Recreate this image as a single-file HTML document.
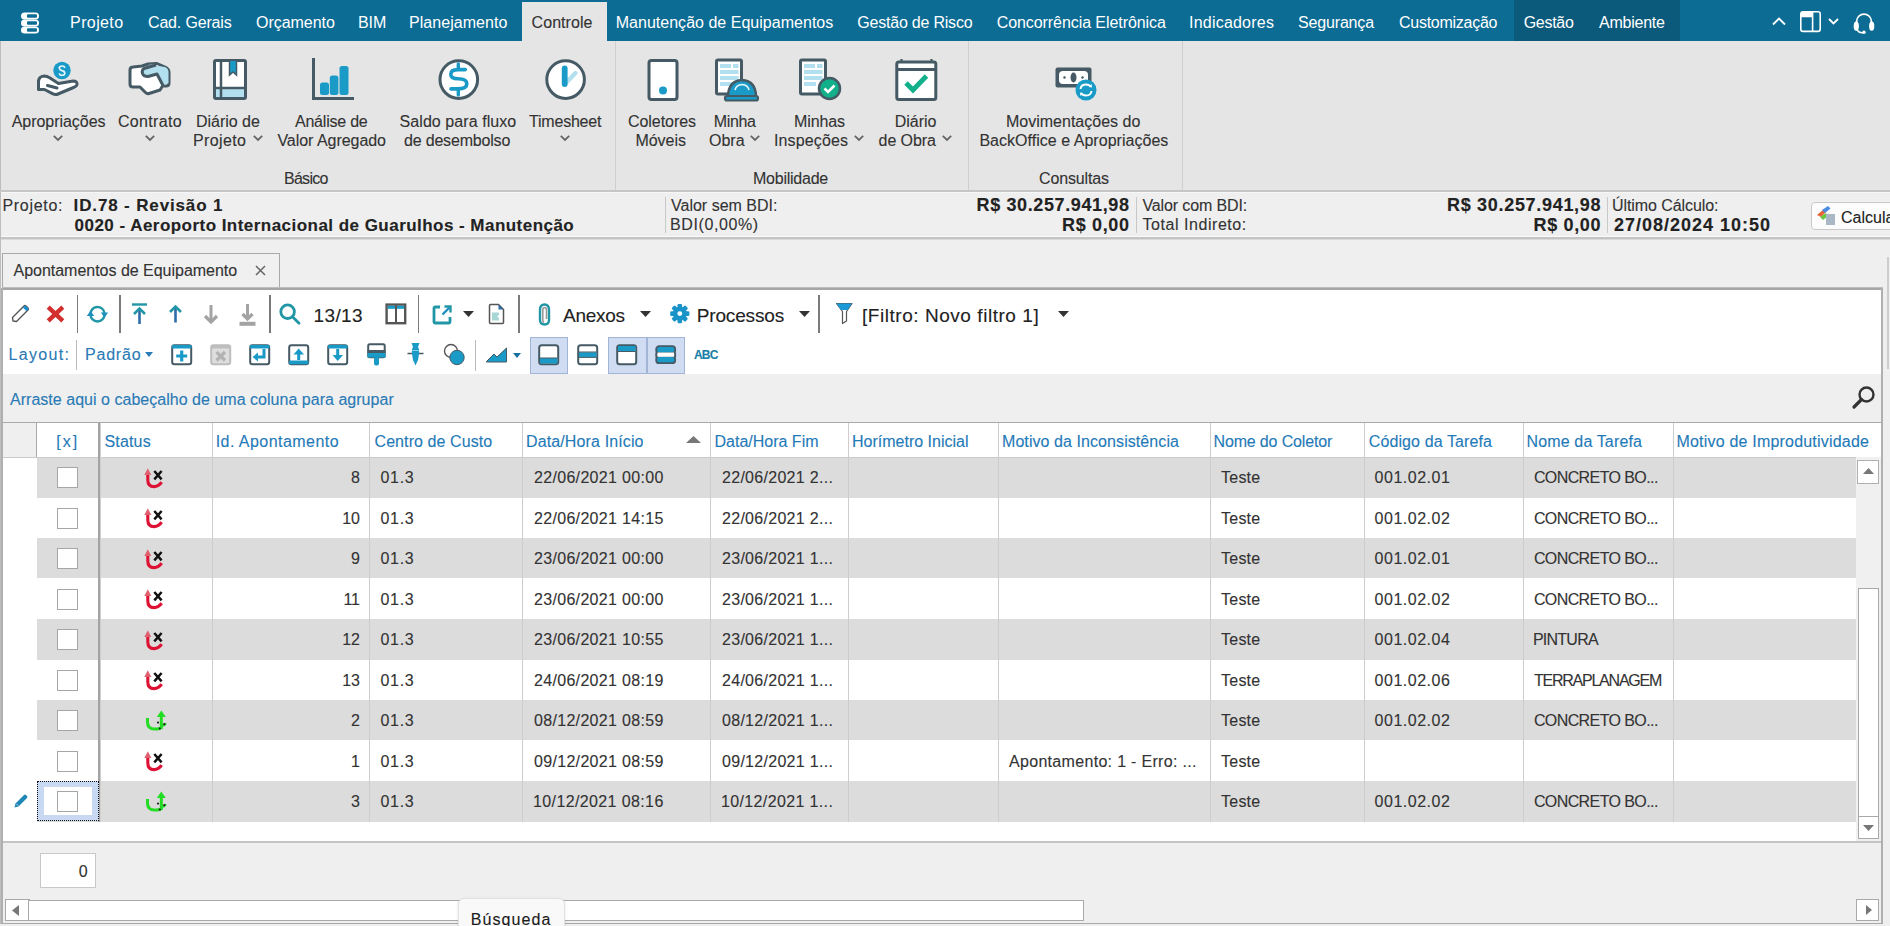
<!DOCTYPE html>
<html><head><meta charset="utf-8"><title>Apontamentos de Equipamento</title>
<style>
html,body{margin:0;padding:0}
body{width:1890px;height:926px;overflow:hidden;position:relative;background:#efefef;font-family:"Liberation Sans",sans-serif}
.a{position:absolute}
.t{position:absolute;white-space:nowrap;line-height:1;-webkit-text-stroke:0.12px currentColor}
svg{overflow:visible}
</style></head><body>

<div class="a" style="left:0px;top:0px;width:1890px;height:41px;background:#0d6c94;"></div>
<div class="a" style="left:1514px;top:0px;width:166px;height:41px;background:#0c5a7b;"></div>
<div class="a" style="left:522px;top:2px;width:85px;height:39px;background:#e5e5e5;"></div>
<svg class="a" style="left:21px;top:12px" width="19" height="22" viewBox="0 0 19 22">
<g fill="#fff"><rect x="0" y="0.5" width="18" height="7" rx="3.5"/><rect x="0" y="7.5" width="18" height="7" rx="3.5"/><rect x="0" y="14.5" width="18" height="7" rx="3.5"/></g>
<g fill="#0d6c94"><rect x="6" y="2.3" width="10" height="3.4" rx="1"/><rect x="6" y="9.3" width="10" height="3.4" rx="1"/><rect x="6" y="16.3" width="10" height="3.4" rx="1"/></g></svg>
<div class="t" style="left:70.10px;top:15px;font-size:16px;color:#fff;letter-spacing:0.384px;-webkit-text-stroke:0;">Projeto</div>
<div class="t" style="left:148.00px;top:15px;font-size:16px;color:#fff;letter-spacing:-0.167px;-webkit-text-stroke:0;">Cad. Gerais</div>
<div class="t" style="left:256.00px;top:15px;font-size:16px;color:#fff;letter-spacing:-0.030px;-webkit-text-stroke:0;">Orçamento</div>
<div class="t" style="left:358.00px;top:15px;font-size:16px;color:#fff;letter-spacing:-0.059px;-webkit-text-stroke:0;">BIM</div>
<div class="t" style="left:409.00px;top:15px;font-size:16px;color:#fff;letter-spacing:0.050px;-webkit-text-stroke:0;">Planejamento</div>
<div class="t" style="left:531.60px;top:15px;font-size:16px;color:#333;letter-spacing:0.046px;">Controle</div>
<div class="t" style="left:615.70px;top:15px;font-size:16px;color:#fff;letter-spacing:0.022px;-webkit-text-stroke:0;">Manutenção de Equipamentos</div>
<div class="t" style="left:857.30px;top:15px;font-size:16px;color:#fff;letter-spacing:-0.213px;-webkit-text-stroke:0;">Gestão de Risco</div>
<div class="t" style="left:996.70px;top:15px;font-size:16px;color:#fff;letter-spacing:-0.071px;-webkit-text-stroke:0;">Concorrência Eletrônica</div>
<div class="t" style="left:1189.00px;top:15px;font-size:16px;color:#fff;letter-spacing:0.218px;-webkit-text-stroke:0;">Indicadores</div>
<div class="t" style="left:1298.00px;top:15px;font-size:16px;color:#fff;letter-spacing:-0.162px;-webkit-text-stroke:0;">Segurança</div>
<div class="t" style="left:1399.00px;top:15px;font-size:16px;color:#fff;letter-spacing:-0.262px;-webkit-text-stroke:0;">Customização</div>
<div class="t" style="left:1523.70px;top:15px;font-size:16px;color:#fff;letter-spacing:-0.297px;-webkit-text-stroke:0;">Gestão</div>
<div class="t" style="left:1599.00px;top:15px;font-size:16px;color:#fff;letter-spacing:-0.242px;-webkit-text-stroke:0;">Ambiente</div>
<svg class="a" style="left:1772px;top:16px" width="14" height="10" viewBox="0 0 14 10"><path d="M1 8.5 L7 2.5 L13 8.5" fill="none" stroke="#fff" stroke-width="1.8"/></svg>
<svg class="a" style="left:1800px;top:11px" width="21" height="21" viewBox="0 0 21 21"><rect x="0.8" y="0.8" width="19.4" height="19.6" rx="2.2" fill="none" stroke="#fff" stroke-width="1.6"/><path d="M1 3 Q1 0.8 3 0.8 H12.6 V6.3 H1 Z" fill="#fff"/><path d="M12.6 1 V20.5" stroke="#fff" stroke-width="1.6"/></svg>
<svg class="a" style="left:1828px;top:18px" width="11" height="7" viewBox="0 0 11 7"><path d="M1 1 L5.5 5.5 L10 1" fill="none" stroke="#fff" stroke-width="1.8"/></svg>
<svg class="a" style="left:1853px;top:11px" width="22" height="22" viewBox="0 0 22 22"><path d="M3.6 14 V10.5 A7.4 7.4 0 0 1 18.4 10.5 V14" fill="none" stroke="#fff" stroke-width="1.7"/><ellipse cx="3.3" cy="15.2" rx="2.6" ry="4.6" fill="#fff"/><ellipse cx="18.7" cy="15.2" rx="2.6" ry="4.6" fill="#fff"/><path d="M4 19 Q6.5 22.5 10.5 21.5" fill="none" stroke="#fff" stroke-width="1.5"/><circle cx="11" cy="21.3" r="1.7" fill="#fff"/></svg>
<div class="a" style="left:1887px;top:13px;width:3px;height:18px;background:#0d6c94;"></div>
<div class="a" style="left:0px;top:41px;width:1890px;height:149px;background:#e5e5e5;"></div>
<div class="a" style="left:0px;top:41px;width:1px;height:149px;background:#bdbdbd;"></div>
<div class="a" style="left:0px;top:190px;width:1890px;height:2px;background:#c6c6c6;"></div>
<div class="a" style="left:615px;top:41px;width:1px;height:149px;background:#cfcfcf;"></div>
<div class="a" style="left:968px;top:41px;width:1px;height:149px;background:#cfcfcf;"></div>
<div class="a" style="left:1182px;top:41px;width:1px;height:149px;background:#cfcfcf;"></div>
<div class="t" style="left:11.70px;top:114px;font-size:16px;color:#333;letter-spacing:-0.043px;">Apropriações</div>
<svg class="a" style="left:53px;top:135px" width="10" height="6" viewBox="0 0 10 6"><path d="M0.8 0.8 L5 5 L9.2 0.8" fill="none" stroke="#666" stroke-width="1.8"/></svg>
<div class="t" style="left:118.00px;top:114px;font-size:16px;color:#333;letter-spacing:0.319px;">Contrato</div>
<svg class="a" style="left:145px;top:135px" width="10" height="6" viewBox="0 0 10 6"><path d="M0.8 0.8 L5 5 L9.2 0.8" fill="none" stroke="#666" stroke-width="1.8"/></svg>
<div class="t" style="left:196.00px;top:114px;font-size:16px;color:#333;letter-spacing:-0.017px;">Diário de</div>
<div class="t" style="left:193.00px;top:133px;font-size:16px;color:#333;letter-spacing:0.367px;">Projeto</div>
<svg class="a" style="left:253px;top:135px" width="10" height="6" viewBox="0 0 10 6"><path d="M0.8 0.8 L5 5 L9.2 0.8" fill="none" stroke="#666" stroke-width="1.8"/></svg>
<div class="t" style="left:295.00px;top:114px;font-size:16px;color:#333;letter-spacing:-0.224px;">Análise de</div>
<div class="t" style="left:277.40px;top:133px;font-size:16px;color:#333;letter-spacing:-0.039px;">Valor Agregado</div>
<div class="t" style="left:399.60px;top:114px;font-size:16px;color:#333;letter-spacing:0.064px;">Saldo para fluxo</div>
<div class="t" style="left:404.00px;top:133px;font-size:16px;color:#333;letter-spacing:-0.185px;">de desembolso</div>
<div class="t" style="left:529.00px;top:114px;font-size:16px;color:#333;letter-spacing:-0.207px;">Timesheet</div>
<svg class="a" style="left:560px;top:135px" width="10" height="6" viewBox="0 0 10 6"><path d="M0.8 0.8 L5 5 L9.2 0.8" fill="none" stroke="#666" stroke-width="1.8"/></svg>
<div class="t" style="left:283.90px;top:171px;font-size:16px;color:#333;letter-spacing:-0.685px;">Básico</div>
<div class="t" style="left:628.00px;top:114px;font-size:16px;color:#333;letter-spacing:-0.060px;">Coletores</div>
<div class="t" style="left:635.40px;top:133px;font-size:16px;color:#333;letter-spacing:-0.016px;">Móveis</div>
<div class="t" style="left:713.70px;top:114px;font-size:16px;color:#333;letter-spacing:-0.345px;">Minha</div>
<div class="t" style="left:709.00px;top:133px;font-size:16px;color:#333;letter-spacing:0.009px;">Obra</div>
<svg class="a" style="left:750px;top:135px" width="10" height="6" viewBox="0 0 10 6"><path d="M0.8 0.8 L5 5 L9.2 0.8" fill="none" stroke="#666" stroke-width="1.8"/></svg>
<div class="t" style="left:794.00px;top:114px;font-size:16px;color:#333;letter-spacing:-0.116px;">Minhas</div>
<div class="t" style="left:774.00px;top:133px;font-size:16px;color:#333;letter-spacing:0.133px;">Inspeções</div>
<svg class="a" style="left:854px;top:135px" width="10" height="6" viewBox="0 0 10 6"><path d="M0.8 0.8 L5 5 L9.2 0.8" fill="none" stroke="#666" stroke-width="1.8"/></svg>
<div class="t" style="left:894.80px;top:114px;font-size:16px;color:#333;letter-spacing:-0.038px;">Diário</div>
<div class="t" style="left:878.60px;top:133px;font-size:16px;color:#333;letter-spacing:-0.086px;">de Obra</div>
<svg class="a" style="left:942px;top:135px" width="10" height="6" viewBox="0 0 10 6"><path d="M0.8 0.8 L5 5 L9.2 0.8" fill="none" stroke="#666" stroke-width="1.8"/></svg>
<div class="t" style="left:753.00px;top:171px;font-size:16px;color:#333;letter-spacing:-0.243px;">Mobilidade</div>
<div class="t" style="left:1006.00px;top:114px;font-size:16px;color:#333;">Movimentações do</div>
<div class="t" style="left:979.40px;top:133px;font-size:16px;color:#333;letter-spacing:0.028px;">BackOffice e Apropriações</div>
<div class="t" style="left:1039.00px;top:171px;font-size:16px;color:#333;letter-spacing:-0.144px;">Consultas</div>
<svg class="a" style="left:36px;top:60px" width="44" height="38" viewBox="0 0 44 38"><circle cx="26" cy="10.5" r="8.7" fill="#1a9bc7"/>
<path d="M23 8.2 Q23.5 6 26 6 Q28.5 6 28.8 7.8 M23.3 8.3 Q23.8 10.3 26 10.6 Q28.6 11 28.8 13.3 Q28.5 15.2 26 15.2 Q23.6 15.2 23.2 13.3" fill="none" stroke="#e8f6fb" stroke-width="1.6"/>
<path d="M2.5 21 Q3 16.5 8 16 Q11 16 14 18 L22.5 23.5 L37 21 Q41.5 21 41 24.5 Q40.5 26.5 37.5 27.5 L22 34 Q19.5 35 16.5 33.6 L8.5 29.5 L2.5 29.5 Z" fill="#fff" stroke="#455a64" stroke-width="3" stroke-linejoin="round"/>
<path d="M11.5 25.5 L21 28" fill="none" stroke="#455a64" stroke-width="3" stroke-linecap="round"/></svg>
<svg class="a" style="left:128px;top:62px" width="44" height="34" viewBox="0 0 44 34"><path d="M2 8 Q2 5 5 5 L14 4 L20 2 L29 1.5 L37 5 Q41 7 41 10 V21 Q41 24 38 24 L34.5 24 L32 28 L21 31.5 Q19 32 17.5 30.5 L12 25 L5 25 Q2 25 2 22 Z" fill="#fff" stroke="#455a64" stroke-width="3" stroke-linejoin="round"/>
<path d="M20 2.5 L37 5 Q40.5 6.5 40.5 10 V21 L34 23.5 L29 12.5 Q24 13.5 20 14.5 Q14.5 15.5 14.5 10 Q14.5 6.5 20 5.5 L28 2.5" fill="#b3e0ee"/>
<path d="M28 3 L16 6.5 Q13.5 8 14.5 11.5 Q15.5 14.5 20 14.5 L29 12 L35 23.5" fill="none" stroke="#455a64" stroke-width="3" stroke-linejoin="round"/></svg>
<svg class="a" style="left:212px;top:58px" width="36" height="44" viewBox="0 0 36 44"><rect x="2.5" y="2.5" width="31" height="38" rx="1.5" fill="#fff" stroke="#455a64" stroke-width="3"/>
<rect x="4" y="31" width="28" height="8" fill="#b3e0ee"/><path d="M4 30 H32" stroke="#455a64" stroke-width="2.5"/>
<path d="M9 2.5 V39" stroke="#455a64" stroke-width="2.5"/>
<path d="M17.5 3 V17 L21 14 L24.5 17 V3" fill="#1a9bc7" stroke="#455a64" stroke-width="1.5"/></svg>
<svg class="a" style="left:311px;top:58px" width="44" height="44" viewBox="0 0 44 44"><path d="M2.5 0 V40.5 H43" fill="none" stroke="#455a64" stroke-width="3"/>
<rect x="9" y="24.5" width="9" height="12.5" rx="2.5" fill="#1a9bc7"/><rect x="18.8" y="17.5" width="8.6" height="19.5" rx="2.5" fill="#1a9bc7"/><rect x="28.5" y="8" width="9" height="29" rx="2.5" fill="#1a9bc7"/></svg>
<svg class="a" style="left:437px;top:58px" width="44" height="44" viewBox="0 0 44 44"><circle cx="21.8" cy="21.6" r="18.8" fill="#fff" stroke="#455a64" stroke-width="3"/>
<path d="M28.3 11.6 H21 Q13.8 11.6 13.8 16.2 Q13.8 20.7 21 20.7 Q29.8 20.7 29.8 25.8 Q29.8 30.9 21 30.9 H14" fill="none" stroke="#1a9bc7" stroke-width="3.6" stroke-linecap="round" stroke-linejoin="round"/><path d="M21.3 6 V11.4 M21.3 31 V37" stroke="#1a9bc7" stroke-width="3.4" stroke-linecap="round"/></svg>
<svg class="a" style="left:543px;top:58px" width="44" height="44" viewBox="0 0 44 44"><circle cx="22.6" cy="21.6" r="18.8" fill="#fff" stroke="#455a64" stroke-width="3"/>
<path d="M22.5 25.5 L32.5 15" stroke="#b3e0ee" stroke-width="4.2" stroke-linecap="round"/><path d="M21.7 10.5 V26" stroke="#1a9bc7" stroke-width="5.8" stroke-linecap="round"/></svg>
<svg class="a" style="left:646px;top:58px" width="34" height="44" viewBox="0 0 34 44"><rect x="3" y="2.5" width="28" height="39" rx="2.5" fill="#fff" stroke="#455a64" stroke-width="3"/><circle cx="17" cy="32.5" r="4" fill="#1a9bc7"/></svg>
<svg class="a" style="left:714px;top:58px" width="45" height="44" viewBox="0 0 45 44"><rect x="2.5" y="2" width="25" height="34" rx="1.5" fill="#fff" stroke="#455a64" stroke-width="3"/>
<rect x="6" y="6" width="11" height="4" fill="#b3e0ee"/><rect x="19" y="6" width="5.5" height="4" fill="#b3e0ee"/><rect x="6" y="12" width="18.5" height="4" fill="#b3e0ee"/><rect x="6" y="18" width="18.5" height="4" fill="#b3e0ee"/><rect x="6" y="24" width="12" height="4" fill="#b3e0ee"/>
<path d="M14 39 Q14 23 28 22 Q42 23 42 39 Z" fill="#1a9bc7" stroke="#455a64" stroke-width="2.5" stroke-linejoin="round"/><rect x="11" y="38" width="33" height="4.5" rx="2" fill="#1a9bc7" stroke="#455a64" stroke-width="2.2"/>
<path d="M21 32 Q22 27 28 26.5 Q34 27 35 32" fill="none" stroke="#e6f5fa" stroke-width="1.6"/></svg>
<svg class="a" style="left:798px;top:58px" width="45" height="44" viewBox="0 0 45 44"><rect x="2.5" y="2" width="25" height="34" rx="1.5" fill="#fff" stroke="#455a64" stroke-width="3"/>
<rect x="6" y="6" width="11" height="4" fill="#b3e0ee"/><rect x="19" y="6" width="5.5" height="4" fill="#b3e0ee"/><rect x="6" y="12" width="18.5" height="4" fill="#b3e0ee"/><rect x="6" y="18" width="18.5" height="4" fill="#b3e0ee"/><rect x="6" y="24" width="12" height="4" fill="#b3e0ee"/>
<circle cx="31.5" cy="30.5" r="10.5" fill="#12b08a" stroke="#455a64" stroke-width="2.5"/><path d="M26.5 30.5 L30 34 L36.5 27.5" fill="none" stroke="#fff" stroke-width="2.6"/></svg>
<svg class="a" style="left:894px;top:57px" width="46" height="46" viewBox="0 0 46 46"><rect x="2.8" y="5" width="39" height="37.5" rx="2" fill="#fff" stroke="#455a64" stroke-width="3"/><path d="M3 12.5 H42" stroke="#455a64" stroke-width="3"/>
<path d="M7.5 2 V6 M37.5 2 V6" stroke="#455a64" stroke-width="2.2"/>
<path d="M12 26 L19 33 L32.5 19" fill="none" stroke="#12b08a" stroke-width="4.8"/></svg>
<svg class="a" style="left:1054px;top:66px" width="40" height="36" viewBox="0 0 40 36"><rect x="1.5" y="1.5" width="36" height="20" rx="2" fill="#455a64"/><rect x="5" y="5" width="29" height="13" rx="4" fill="#fff"/>
<ellipse cx="19.5" cy="11.5" rx="3" ry="5" fill="#455a64"/><circle cx="10.5" cy="11.5" r="1.2" fill="#455a64"/><circle cx="28.5" cy="11.5" r="1.2" fill="#455a64"/>
<circle cx="32" cy="24" r="10.5" fill="#1a9bc7"/><path d="M26.5 23 Q27 18.5 32 18.5 Q35.5 18.5 37 21 M37.5 25 Q37 29.5 32 29.5 Q28.5 29.5 27 27" fill="none" stroke="#fff" stroke-width="2"/>
<path d="M35 20.5 L38 21.5 L37.5 18" fill="#fff"/><path d="M29 27.5 L26 26.5 L26.5 30" fill="#fff"/></svg>
<div class="a" style="left:0px;top:192px;width:1890px;height:46px;background:#efefef;"></div>
<div class="a" style="left:0px;top:192px;width:1890px;height:1px;background:#f7f7f7;"></div>
<div class="a" style="left:0px;top:236px;width:1890px;height:1px;background:#fafafa;"></div>
<div class="a" style="left:0px;top:237px;width:1890px;height:2px;background:#c4c4c4;"></div>
<div class="a" style="left:0px;top:239px;width:1890px;height:1px;background:#dadada;"></div>
<div class="a" style="left:0px;top:192px;width:1px;height:47px;background:#bdbdbd;"></div>
<div class="t" style="left:2.50px;top:198px;font-size:16px;color:#333;letter-spacing:0.686px;">Projeto:</div>
<div class="t" style="left:73.60px;top:197px;font-size:17px;color:#222;font-weight:700;letter-spacing:0.858px;">ID.78 - Revisão 1</div>
<div class="t" style="left:74.60px;top:217px;font-size:17px;color:#222;font-weight:700;letter-spacing:0.465px;">0020 - Aeroporto Internacional de Guarulhos - Manutenção</div>
<div class="a" style="left:665px;top:197px;width:1px;height:36px;background:#c8c8c8;"></div>
<div class="t" style="left:671.00px;top:198px;font-size:16px;color:#333;letter-spacing:0.004px;">Valor sem BDI:</div>
<div class="t" style="left:670.00px;top:217px;font-size:16px;color:#333;letter-spacing:0.604px;">BDI(0,00%)</div>
<div class="t" style="left:976.50px;top:196px;font-size:18px;color:#222;font-weight:700;letter-spacing:0.626px;">R$ 30.257.941,98</div>
<div class="t" style="left:1062.00px;top:216px;font-size:18px;color:#222;font-weight:700;letter-spacing:0.661px;">R$ 0,00</div>
<div class="a" style="left:1136px;top:197px;width:1px;height:36px;background:#c8c8c8;"></div>
<div class="t" style="left:1142.50px;top:198px;font-size:16px;color:#333;letter-spacing:-0.135px;">Valor com BDI:</div>
<div class="t" style="left:1142.50px;top:217px;font-size:16px;color:#333;letter-spacing:0.549px;">Total Indireto:</div>
<div class="t" style="left:1447.00px;top:196px;font-size:18px;color:#222;font-weight:700;letter-spacing:0.693px;">R$ 30.257.941,98</div>
<div class="t" style="left:1533.50px;top:216px;font-size:18px;color:#222;font-weight:700;letter-spacing:0.661px;">R$ 0,00</div>
<div class="a" style="left:1607px;top:197px;width:1px;height:36px;background:#c8c8c8;"></div>
<div class="t" style="left:1612.00px;top:198px;font-size:16px;color:#333;letter-spacing:-0.081px;">Último Cálculo:</div>
<div class="t" style="left:1614.00px;top:216px;font-size:18px;color:#222;font-weight:700;letter-spacing:0.992px;">27/08/2024 10:50</div>
<div class="a" style="left:1811px;top:202px;width:100px;height:28px;background:#fcfcfc;border:1px solid #c9c9c9;border-radius:4px;box-sizing:border-box"></div>
<svg class="a" style="left:1815px;top:205px" width="22" height="22" viewBox="0 0 22 22"><path d="M2 10 L9 4 L11 7 L6 12 Z" fill="#e8643c"/><path d="M7 5 L13 1 L15.5 3.5 L10 8 Z" fill="#4a8de0"/><path d="M5 12 L11 8 L13 11 L8 15 Z" fill="#6cc644"/><rect x="11" y="9" width="9" height="11" fill="#a9b7c6"/></svg>
<div class="t" style="left:1841.00px;top:210px;font-size:16px;color:#222;">Calcula</div>
<div class="a" style="left:0px;top:240px;width:1890px;height:48px;background:#efefef;"></div>
<div class="a" style="left:0px;top:239px;width:1px;height:687px;background:#bdbdbd;"></div>
<div class="a" style="left:2px;top:253px;width:278px;height:36px;background:#f0f0f0;border:1px solid #a9a9a9;border-bottom:none;box-sizing:border-box"></div>
<div class="t" style="left:13.50px;top:263px;font-size:16px;color:#333;letter-spacing:-0.018px;">Apontamentos de Equipamento</div>
<svg class="a" style="left:255px;top:265px" width="11" height="11" viewBox="0 0 11 11"><path d="M1 1 L10 10 M10 1 L1 10" stroke="#666" stroke-width="1.5"/></svg>
<div class="a" style="left:1887px;top:257px;width:2px;height:112px;background:#cdcdcd;"></div>
<div class="a" style="left:2px;top:287px;width:1881px;height:1px;background:#bdbdbd;"></div>
<div class="a" style="left:2px;top:288px;width:1881px;height:2px;background:#a6a6a6;"></div>
<div class="a" style="left:1px;top:288px;width:2px;height:638px;background:#b0b0b0;"></div>
<div class="a" style="left:1881px;top:288px;width:2px;height:636px;background:#b0b0b0;"></div>
<div class="a" style="left:3px;top:290px;width:1878px;height:84px;background:#fff;"></div>
<div class="a" style="left:3px;top:374px;width:1878px;height:48px;background:#efefef;"></div>
<svg class="a" style="left:11px;top:304px" width="19" height="19" viewBox="0 0 19 19"><path d="M2 17 L1.5 13.5 L13 2 Q14 1 15 2 L17 4 Q18 5 17 6 L5.5 17.5 Z" fill="#fff" stroke="#555" stroke-width="1.4" stroke-linejoin="round"/><path d="M13.2 2.2 Q14 1.2 15 2 L17 4 Q17.8 5 17 5.8 L15.6 7.2 L11.8 3.5 Z" fill="#1a8fd0"/></svg>
<svg class="a" style="left:46px;top:305px" width="19" height="18" viewBox="0 0 19 18"><path d="M2.2 2.2 L16.8 15.8 M16.8 2.2 L2.2 15.8" stroke="#d32f2f" stroke-width="4.4"/></svg>
<div class="a" style="left:76.5px;top:295px;width:1.5px;height:38px;background:#7a7a7a;"></div>
<svg class="a" style="left:86px;top:304px" width="23" height="20" viewBox="0 0 23 20"><path d="M4.5 10.5 A7 7 0 0 1 18.5 9.5" fill="none" stroke="#2196a6" stroke-width="2.4"/><path d="M18.5 10.5 A7 7 0 0 1 4.5 10.5" fill="none" stroke="#2196a6" stroke-width="2.4"/><path d="M0.8 12 L4.5 6.8 L8.2 12 Z" fill="#1f8fc0"/><path d="M14.8 8.5 L18.5 13.5 L22.2 8.5 Z" fill="#1f8fc0"/></svg>
<div class="a" style="left:119px;top:295px;width:1.5px;height:38px;background:#7a7a7a;"></div>
<svg class="a" style="left:131px;top:303px" width="17" height="22" viewBox="0 0 17 22"><path d="M1 1.5 H16" stroke="#2196a6" stroke-width="2.4"/><path d="M8.5 7 V21" stroke="#2d6ca8" stroke-width="2.6"/><path d="M3 11 L8.5 5.5 L14 11" fill="none" stroke="#2196a6" stroke-width="2.6"/></svg>
<svg class="a" style="left:168px;top:304px" width="15" height="20" viewBox="0 0 15 20"><path d="M7.5 3 V18.5" stroke="#2d6ca8" stroke-width="2.6"/><path d="M2 8 L7.5 2.5 L13 8" fill="none" stroke="#2196a6" stroke-width="2.6"/></svg>
<svg class="a" style="left:203px;top:304px" width="16" height="20" viewBox="0 0 16 20"><path d="M8 1 V16" stroke="#a3a3a3" stroke-width="3"/><path d="M2 12 L8 18 L14 12" fill="none" stroke="#a3a3a3" stroke-width="3.2"/></svg>
<svg class="a" style="left:238px;top:303px" width="19" height="24" viewBox="0 0 19 24"><path d="M9.5 1 V14" stroke="#a3a3a3" stroke-width="3"/><path d="M4.5 11 L9.5 16 L14.5 11" fill="none" stroke="#a3a3a3" stroke-width="3.2"/><path d="M1.5 20.8 H17.5" stroke="#a3a3a3" stroke-width="4"/></svg>
<div class="a" style="left:269px;top:295px;width:1.5px;height:38px;background:#7a7a7a;"></div>
<svg class="a" style="left:278px;top:303px" width="23" height="22" viewBox="0 0 23 22"><circle cx="9.6" cy="8.7" r="6.8" fill="none" stroke="#2196a6" stroke-width="2.8"/><path d="M14.5 13.8 L21 20.3" stroke="#2196a6" stroke-width="2.8" stroke-linecap="round"/></svg>
<div class="t" style="left:313.60px;top:306px;font-size:19px;color:#222;letter-spacing:0.355px;">13/13</div>
<svg class="a" style="left:385px;top:303px" width="22" height="22" viewBox="0 0 22 22"><rect x="1.6" y="1.6" width="18.6" height="18.6" fill="#fff" stroke="#555" stroke-width="2.4"/><rect x="2.8" y="2.8" width="7.3" height="3" fill="#1a9bc7"/><rect x="11.9" y="2.8" width="7.3" height="3" fill="#1a9bc7"/><path d="M11 2 V20" stroke="#555" stroke-width="2"/></svg>
<div class="a" style="left:417.5px;top:295px;width:1.5px;height:38px;background:#7a7a7a;"></div>
<svg class="a" style="left:432px;top:305px" width="21" height="20" viewBox="0 0 21 20"><path d="M8 2 H3.5 Q2 2 2 3.5 V16.5 Q2 18 3.5 18 H16.5 Q18 18 18 16.5 V12" fill="none" stroke="#2196a6" stroke-width="2.8"/><path d="M10.5 9.5 L18 2" stroke="#1f8fc0" stroke-width="2.4"/><path d="M12.5 1.5 H18.5 V7.5" fill="none" stroke="#2196a6" stroke-width="2.4"/></svg>
<svg class="a" style="left:463px;top:311px" width="11" height="6" viewBox="0 0 11 6"><path d="M0 0 H11 L5.5 6 Z" fill="#333"/></svg>
<svg class="a" style="left:488px;top:303px" width="17" height="22" viewBox="0 0 17 22"><path d="M2 1.5 H10.5 L15.5 6.5 V19.5 Q15.5 20.5 14.5 20.5 H2.5 Q1.5 20.5 1.5 19.5 V2.5 Q1.5 1.5 2.5 1.5" fill="#fff" stroke="#555" stroke-width="1.5"/><path d="M10.5 1.5 L15.5 6.5 H10.5 Z" fill="#2d6ca8"/><path d="M4 9.5 H11 V12 L9 13.5 L11 15 V17.5 H4 Z" fill="#a6d6d6"/></svg>
<div class="a" style="left:518px;top:295px;width:1.5px;height:38px;background:#7a7a7a;"></div>
<svg class="a" style="left:537px;top:303px" width="15" height="23" viewBox="0 0 15 23"><path d="M3 17 V6.5 Q3 1.5 7.5 1.5 Q12 1.5 12 6.5 V17 Q12 21.5 7.5 21.5 Q3 21.5 3 17" fill="none" stroke="#2196a6" stroke-width="2.4"/><path d="M9.5 16 V7 Q9.5 4.5 7.5 4.5 Q5.8 4.5 5.8 7 V17.5 Q5.8 19 7 19.5" fill="none" stroke="#999" stroke-width="1.6"/></svg>
<div class="t" style="left:563.00px;top:306px;font-size:19px;color:#222;letter-spacing:-0.295px;">Anexos</div>
<svg class="a" style="left:640px;top:311px" width="11" height="6" viewBox="0 0 11 6"><path d="M0 0 H11 L5.5 6 Z" fill="#333"/></svg>
<svg class="a" style="left:670px;top:304px" width="20" height="20" viewBox="0 0 20 20"><g transform="translate(9.8,9.6)"><g fill="#1a93c9"><rect x="-2.3" y="-9.6" width="4.6" height="5" rx="1.2" transform="rotate(0)"/><rect x="-2.3" y="-9.6" width="4.6" height="5" rx="1.2" transform="rotate(45)"/><rect x="-2.3" y="-9.6" width="4.6" height="5" rx="1.2" transform="rotate(90)"/><rect x="-2.3" y="-9.6" width="4.6" height="5" rx="1.2" transform="rotate(135)"/><rect x="-2.3" y="-9.6" width="4.6" height="5" rx="1.2" transform="rotate(180)"/><rect x="-2.3" y="-9.6" width="4.6" height="5" rx="1.2" transform="rotate(225)"/><rect x="-2.3" y="-9.6" width="4.6" height="5" rx="1.2" transform="rotate(270)"/><rect x="-2.3" y="-9.6" width="4.6" height="5" rx="1.2" transform="rotate(315)"/></g><circle r="6.9" fill="#1a93c9"/><circle r="2.4" fill="#fff"/></g></svg>
<div class="t" style="left:696.80px;top:306px;font-size:19px;color:#222;letter-spacing:-0.163px;">Processos</div>
<svg class="a" style="left:799px;top:311px" width="11" height="6" viewBox="0 0 11 6"><path d="M0 0 H11 L5.5 6 Z" fill="#333"/></svg>
<div class="a" style="left:818px;top:295px;width:1.5px;height:38px;background:#7a7a7a;"></div>
<svg class="a" style="left:836px;top:303px" width="17" height="21" viewBox="0 0 17 21"><path d="M0.5 0.5 H16 L10.5 8.5 V18 L6.5 20.5 V8.5 Z" fill="#fff" stroke="#555" stroke-width="1.2" stroke-linejoin="round"/><path d="M0.5 0.5 H16 L11.5 7 H5 Z" fill="#1a9bd7"/></svg>
<div class="t" style="left:862.00px;top:306px;font-size:19px;color:#222;letter-spacing:0.544px;">[Filtro: Novo filtro 1]</div>
<svg class="a" style="left:1058px;top:311px" width="11" height="6" viewBox="0 0 11 6"><path d="M0 0 H11 L5.5 6 Z" fill="#333"/></svg>
<div class="t" style="left:8.60px;top:347px;font-size:16px;color:#2a7ab5;letter-spacing:1.293px;">Layout:</div>
<div class="a" style="left:75.5px;top:340px;width:1.2px;height:30px;background:#bdbdbd;"></div>
<div class="t" style="left:85.00px;top:347px;font-size:16px;color:#2a7ab5;letter-spacing:0.801px;">Padrão</div>
<svg class="a" style="left:145px;top:352px" width="8" height="5" viewBox="0 0 8 5"><path d="M0 0 H8 L4 5 Z" fill="#2a7ab5"/></svg>
<svg class="a" style="left:171px;top:344px" width="22" height="22" viewBox="0 0 22 22"><rect x="1.2" y="1.2" width="19" height="19" rx="2.2" fill="#fff" stroke="#455a64" stroke-width="2"/><rect x="1" y="1" width="19.5" height="3.5" rx="1" fill="#1a9bc7"/><path d="M10.7 6.5 V17.5 M5.2 12 H16.2" stroke="#1a9bc7" stroke-width="3.2"/></svg>
<svg class="a" style="left:210px;top:344px" width="22" height="22" viewBox="0 0 22 22"><rect x="1.2" y="1.2" width="19" height="19" rx="2.2" fill="#dedede" stroke="#bdbdbd" stroke-width="2"/><rect x="1" y="1" width="19.5" height="3.5" rx="1" fill="#bdbdbd"/><path d="M6.5 8 L15 16.5 M15 8 L6.5 16.5" stroke="#b3b3b3" stroke-width="3.2"/></svg>
<svg class="a" style="left:249px;top:344px" width="22" height="22" viewBox="0 0 22 22"><rect x="1.2" y="1.2" width="19" height="19" rx="2.2" fill="#fff" stroke="#455a64" stroke-width="2"/><rect x="1" y="1" width="19.5" height="3.5" rx="1" fill="#1a9bc7"/><path d="M15 5 V13 H8" fill="none" stroke="#1a9bc7" stroke-width="3"/><path d="M3.5 13 L9 8.5 V17.5 Z" fill="#1a9bc7"/></svg>
<svg class="a" style="left:288px;top:344px" width="22" height="22" viewBox="0 0 22 22"><rect x="1.2" y="1.2" width="19" height="19" rx="2.2" fill="#fff" stroke="#455a64" stroke-width="2"/><rect x="1" y="16.5" width="19.5" height="3.8" rx="1" fill="#1a9bc7"/><path d="M10.7 16 V8" stroke="#1a9bc7" stroke-width="3"/><path d="M5.5 10.5 L10.7 4.5 L16 10.5 Z" fill="#1a9bc7"/></svg>
<svg class="a" style="left:327px;top:344px" width="22" height="22" viewBox="0 0 22 22"><rect x="1.2" y="1.2" width="19" height="19" rx="2.2" fill="#fff" stroke="#455a64" stroke-width="2"/><rect x="1" y="1" width="19.5" height="3.5" rx="1" fill="#1a9bc7"/><path d="M10.7 5 V13" stroke="#1a9bc7" stroke-width="3"/><path d="M5.5 11 L10.7 17 L16 11 Z" fill="#1a9bc7"/></svg>
<svg class="a" style="left:367px;top:343px" width="19" height="23" viewBox="0 0 19 23"><rect x="1.2" y="1.2" width="16.5" height="13" rx="1.5" fill="#fff" stroke="#455a64" stroke-width="2"/><rect x="0.5" y="7" width="18" height="3" fill="#455a64"/><rect x="0.5" y="10" width="18" height="4.5" fill="#1a9bc7"/><rect x="7" y="14" width="5" height="8.5" rx="2" fill="#1a9bc7"/></svg>
<svg class="a" style="left:407px;top:342px" width="17" height="24" viewBox="0 0 17 24"><path d="M4.5 1 H12.5 L11 5 L12.5 8.5 H4.5 L6 5 Z" fill="#1a9bc7"/><path d="M0.5 11.5 H16.5" stroke="#455a64" stroke-width="1.5"/><path d="M5 9 H12 V12 L11 18 L8.5 23.5 L6 18 L5 12 Z" fill="#1a9bc7"/></svg>
<svg class="a" style="left:443px;top:343px" width="23" height="23" viewBox="0 0 23 23"><circle cx="8" cy="8" r="6.5" fill="none" stroke="#555" stroke-width="1.4"/><circle cx="14" cy="14.5" r="7.2" fill="#1a9bc7" stroke="#455a64" stroke-width="1"/></svg>
<div class="a" style="left:474.5px;top:340px;width:1.2px;height:31px;background:#bdbdbd;"></div>
<svg class="a" style="left:486px;top:347px" width="22" height="16" viewBox="0 0 22 16"><path d="M0.5 14.5 L8 7 L11 10 L20.5 1 V15 H0.5 Z" fill="#1a9bc7" stroke="#455a64" stroke-width="1"/></svg>
<svg class="a" style="left:513px;top:353px" width="8" height="5" viewBox="0 0 8 5"><path d="M0 0 H8 L4 5 Z" fill="#1a6fa0"/></svg>
<div class="a" style="left:530px;top:337px;width:38px;height:37px;background:#cfdcf2;border:1.3px solid #a2b5d6;box-sizing:border-box"></div>
<div class="a" style="left:608px;top:337px;width:77px;height:37px;background:#cfdcf2;border:1.3px solid #a2b5d6;box-sizing:border-box"></div>
<div class="a" style="left:646px;top:337px;width:1.5px;height:37px;background:#a2b5d6;"></div>
<svg class="a" style="left:538px;top:344px" width="22" height="22" viewBox="0 0 22 22"><rect x="1.2" y="1.2" width="19" height="19" rx="2.5" fill="#fff" stroke="#455a64" stroke-width="2"/><rect x="2" y="14" width="17.5" height="5.5" fill="#1a9bc7"/><path d="M2 14 H19.5" stroke="#455a64" stroke-width="1"/></svg>
<svg class="a" style="left:577px;top:344px" width="22" height="22" viewBox="0 0 22 22"><rect x="1.2" y="1.2" width="19" height="19" rx="2.5" fill="#fff" stroke="#455a64" stroke-width="2"/><rect x="2" y="8.2" width="17.5" height="5" fill="#1a9bc7"/><path d="M2 8 H19.5 M2 13.4 H19.5" stroke="#455a64" stroke-width="1"/></svg>
<svg class="a" style="left:616px;top:344px" width="22" height="22" viewBox="0 0 22 22"><rect x="1.2" y="1.2" width="19" height="19" rx="2.5" fill="#fff" stroke="#455a64" stroke-width="2"/><rect x="2" y="2" width="17.5" height="5.5" fill="#1a9bc7"/><path d="M2 7.5 H19.5" stroke="#455a64" stroke-width="1"/></svg>
<svg class="a" style="left:655px;top:344px" width="22" height="22" viewBox="0 0 22 22"><rect x="1.2" y="2.2" width="19" height="7" rx="3" fill="#1a9bc7" stroke="#455a64" stroke-width="1.8"/><rect x="1.2" y="12.2" width="19" height="7" rx="3" fill="#1a9bc7" stroke="#455a64" stroke-width="1.8"/><rect x="2.5" y="8.5" width="16.5" height="4.3" fill="#fff"/><path d="M1.2 8.5 V13 M20.2 8.5 V13" stroke="#455a64" stroke-width="1.8"/></svg>
<div class="t" style="left:694.00px;top:349px;font-size:12px;color:#1a7fa8;font-weight:700;letter-spacing:-0.800px;font-family:"Liberation Sans";transform:scaleY(0.85);transform-origin:0 100%;">ABC</div>
<div class="t" style="left:10.00px;top:392px;font-size:16px;color:#2a7ab5;letter-spacing:0.025px;">Arraste aqui o cabeçalho de uma coluna para agrupar</div>
<svg class="a" style="left:1851px;top:385px" width="26" height="25" viewBox="0 0 26 25"><circle cx="15.5" cy="9.5" r="7" fill="none" stroke="#333" stroke-width="2.4"/><path d="M10.5 14.5 L3 22" stroke="#333" stroke-width="3.2" stroke-linecap="round"/></svg>
<div class="a" style="left:3px;top:422px;width:1878px;height:1.3px;background:#a9a9a9;"></div>
<div class="a" style="left:3px;top:423px;width:1878px;height:34px;background:#fff;"></div>
<div class="a" style="left:3px;top:423px;width:34px;height:34px;background:#efefef;"></div>
<div class="t" style="left:56.30px;top:434px;font-size:16px;color:#1f7ab8;letter-spacing:1.977px;">[x]</div>
<div class="t" style="left:104.40px;top:434px;font-size:16px;color:#1f7ab8;letter-spacing:0.188px;">Status</div>
<div class="t" style="left:215.70px;top:434px;font-size:16px;color:#1f7ab8;letter-spacing:0.456px;">Id. Apontamento</div>
<div class="t" style="left:374.50px;top:434px;font-size:16px;color:#1f7ab8;letter-spacing:0.085px;">Centro de Custo</div>
<div class="t" style="left:526.00px;top:434px;font-size:16px;color:#1f7ab8;letter-spacing:0.126px;">Data/Hora Início</div>
<div class="t" style="left:714.50px;top:434px;font-size:16px;color:#1f7ab8;">Data/Hora Fim</div>
<div class="t" style="left:852.00px;top:434px;font-size:16px;color:#1f7ab8;letter-spacing:0.005px;">Horímetro Inicial</div>
<div class="t" style="left:1002.00px;top:434px;font-size:16px;color:#1f7ab8;letter-spacing:0.074px;">Motivo da Inconsistência</div>
<div class="t" style="left:1213.50px;top:434px;font-size:16px;color:#1f7ab8;letter-spacing:-0.151px;">Nome do Coletor</div>
<div class="t" style="left:1368.80px;top:434px;font-size:16px;color:#1f7ab8;letter-spacing:0.103px;">Código da Tarefa</div>
<div class="t" style="left:1526.50px;top:434px;font-size:16px;color:#1f7ab8;letter-spacing:0.143px;">Nome da Tarefa</div>
<div class="t" style="left:1676.50px;top:434px;font-size:16px;color:#1f7ab8;letter-spacing:0.198px;">Motivo de Improdutividade</div>
<svg class="a" style="left:686px;top:436px" width="15" height="7" viewBox="0 0 15 7"><path d="M0 7 L7.5 0 L15 7 Z" fill="#777"/></svg>
<div class="a" style="left:3px;top:457px;width:34px;height:385px;background:#fff;"></div>
<div class="a" style="left:37px;top:457px;width:1819px;height:385px;background:#fff;"></div>
<div class="a" style="left:37px;top:457px;width:1819px;height:41px;background:#dcdcdc;"></div>
<div class="a" style="left:57px;top:467.0px;width:21px;height:21px;background:#fff;border:1.5px solid #a6a6a6;box-sizing:border-box"></div>
<svg class="a" style="left:143px;top:466px" width="21" height="22" viewBox="0 0 21 22"><path d="M4.8 7 V14 Q4.8 20.6 11 20.6 Q15.8 20.6 18.6 16.2" fill="none" stroke="#dd1133" stroke-width="3.1"/><path d="M1.3 9 L4.8 2.3 L8.3 9 Z" fill="#e06070"/><path d="M11.3 5 L18.6 13.3 M18.6 5 L11.3 13.3" stroke="#111" stroke-width="2.5"/></svg>
<div class="t" style="left:351.10px;top:470px;font-size:16px;color:#333;">8</div>
<div class="t" style="left:380.60px;top:470px;font-size:16px;color:#333;letter-spacing:0.619px;">01.3</div>
<div class="t" style="left:534.00px;top:470px;font-size:16px;color:#333;letter-spacing:0.316px;">22/06/2021 00:00</div>
<div class="t" style="left:722.00px;top:470px;font-size:16px;color:#333;letter-spacing:0.292px;">22/06/2021 2...</div>
<div class="t" style="left:1221.00px;top:470px;font-size:16px;color:#333;letter-spacing:0.239px;">Teste</div>
<div class="t" style="left:1374.60px;top:470px;font-size:16px;color:#333;letter-spacing:0.515px;">001.02.01</div>
<div class="t" style="left:1533.90px;top:470px;font-size:16px;color:#333;letter-spacing:-0.594px;">CONCRETO BO...</div>
<div class="a" style="left:57px;top:507.5px;width:21px;height:21px;background:#fff;border:1.5px solid #a6a6a6;box-sizing:border-box"></div>
<svg class="a" style="left:143px;top:506px" width="21" height="22" viewBox="0 0 21 22"><path d="M4.8 7 V14 Q4.8 20.6 11 20.6 Q15.8 20.6 18.6 16.2" fill="none" stroke="#dd1133" stroke-width="3.1"/><path d="M1.3 9 L4.8 2.3 L8.3 9 Z" fill="#e06070"/><path d="M11.3 5 L18.6 13.3 M18.6 5 L11.3 13.3" stroke="#111" stroke-width="2.5"/></svg>
<div class="t" style="left:342.20px;top:511px;font-size:16px;color:#333;">10</div>
<div class="t" style="left:380.60px;top:511px;font-size:16px;color:#333;letter-spacing:0.619px;">01.3</div>
<div class="t" style="left:534.00px;top:511px;font-size:16px;color:#333;letter-spacing:0.316px;">22/06/2021 14:15</div>
<div class="t" style="left:722.00px;top:511px;font-size:16px;color:#333;letter-spacing:0.292px;">22/06/2021 2...</div>
<div class="t" style="left:1221.00px;top:511px;font-size:16px;color:#333;letter-spacing:0.239px;">Teste</div>
<div class="t" style="left:1374.60px;top:511px;font-size:16px;color:#333;letter-spacing:0.515px;">001.02.02</div>
<div class="t" style="left:1533.90px;top:511px;font-size:16px;color:#333;letter-spacing:-0.594px;">CONCRETO BO...</div>
<div class="a" style="left:37px;top:538px;width:1819px;height:40px;background:#dcdcdc;"></div>
<div class="a" style="left:57px;top:548.0px;width:21px;height:21px;background:#fff;border:1.5px solid #a6a6a6;box-sizing:border-box"></div>
<svg class="a" style="left:143px;top:547px" width="21" height="22" viewBox="0 0 21 22"><path d="M4.8 7 V14 Q4.8 20.6 11 20.6 Q15.8 20.6 18.6 16.2" fill="none" stroke="#dd1133" stroke-width="3.1"/><path d="M1.3 9 L4.8 2.3 L8.3 9 Z" fill="#e06070"/><path d="M11.3 5 L18.6 13.3 M18.6 5 L11.3 13.3" stroke="#111" stroke-width="2.5"/></svg>
<div class="t" style="left:351.10px;top:551px;font-size:16px;color:#333;">9</div>
<div class="t" style="left:380.60px;top:551px;font-size:16px;color:#333;letter-spacing:0.619px;">01.3</div>
<div class="t" style="left:534.00px;top:551px;font-size:16px;color:#333;letter-spacing:0.316px;">23/06/2021 00:00</div>
<div class="t" style="left:722.00px;top:551px;font-size:16px;color:#333;letter-spacing:0.292px;">23/06/2021 1...</div>
<div class="t" style="left:1221.00px;top:551px;font-size:16px;color:#333;letter-spacing:0.239px;">Teste</div>
<div class="t" style="left:1374.60px;top:551px;font-size:16px;color:#333;letter-spacing:0.515px;">001.02.01</div>
<div class="t" style="left:1533.90px;top:551px;font-size:16px;color:#333;letter-spacing:-0.594px;">CONCRETO BO...</div>
<div class="a" style="left:57px;top:588.5px;width:21px;height:21px;background:#fff;border:1.5px solid #a6a6a6;box-sizing:border-box"></div>
<svg class="a" style="left:143px;top:587px" width="21" height="22" viewBox="0 0 21 22"><path d="M4.8 7 V14 Q4.8 20.6 11 20.6 Q15.8 20.6 18.6 16.2" fill="none" stroke="#dd1133" stroke-width="3.1"/><path d="M1.3 9 L4.8 2.3 L8.3 9 Z" fill="#e06070"/><path d="M11.3 5 L18.6 13.3 M18.6 5 L11.3 13.3" stroke="#111" stroke-width="2.5"/></svg>
<div class="t" style="left:343.39px;top:592px;font-size:16px;color:#333;">11</div>
<div class="t" style="left:380.60px;top:592px;font-size:16px;color:#333;letter-spacing:0.619px;">01.3</div>
<div class="t" style="left:534.00px;top:592px;font-size:16px;color:#333;letter-spacing:0.316px;">23/06/2021 00:00</div>
<div class="t" style="left:722.00px;top:592px;font-size:16px;color:#333;letter-spacing:0.292px;">23/06/2021 1...</div>
<div class="t" style="left:1221.00px;top:592px;font-size:16px;color:#333;letter-spacing:0.239px;">Teste</div>
<div class="t" style="left:1374.60px;top:592px;font-size:16px;color:#333;letter-spacing:0.515px;">001.02.02</div>
<div class="t" style="left:1533.90px;top:592px;font-size:16px;color:#333;letter-spacing:-0.594px;">CONCRETO BO...</div>
<div class="a" style="left:37px;top:619px;width:1819px;height:41px;background:#dcdcdc;"></div>
<div class="a" style="left:57px;top:629.0px;width:21px;height:21px;background:#fff;border:1.5px solid #a6a6a6;box-sizing:border-box"></div>
<svg class="a" style="left:143px;top:628px" width="21" height="22" viewBox="0 0 21 22"><path d="M4.8 7 V14 Q4.8 20.6 11 20.6 Q15.8 20.6 18.6 16.2" fill="none" stroke="#dd1133" stroke-width="3.1"/><path d="M1.3 9 L4.8 2.3 L8.3 9 Z" fill="#e06070"/><path d="M11.3 5 L18.6 13.3 M18.6 5 L11.3 13.3" stroke="#111" stroke-width="2.5"/></svg>
<div class="t" style="left:342.20px;top:632px;font-size:16px;color:#333;">12</div>
<div class="t" style="left:380.60px;top:632px;font-size:16px;color:#333;letter-spacing:0.619px;">01.3</div>
<div class="t" style="left:534.00px;top:632px;font-size:16px;color:#333;letter-spacing:0.316px;">23/06/2021 10:55</div>
<div class="t" style="left:722.00px;top:632px;font-size:16px;color:#333;letter-spacing:0.292px;">23/06/2021 1...</div>
<div class="t" style="left:1221.00px;top:632px;font-size:16px;color:#333;letter-spacing:0.239px;">Teste</div>
<div class="t" style="left:1374.60px;top:632px;font-size:16px;color:#333;letter-spacing:0.515px;">001.02.04</div>
<div class="t" style="left:1532.90px;top:632px;font-size:16px;color:#333;letter-spacing:-0.742px;">PINTURA</div>
<div class="a" style="left:57px;top:669.5px;width:21px;height:21px;background:#fff;border:1.5px solid #a6a6a6;box-sizing:border-box"></div>
<svg class="a" style="left:143px;top:668px" width="21" height="22" viewBox="0 0 21 22"><path d="M4.8 7 V14 Q4.8 20.6 11 20.6 Q15.8 20.6 18.6 16.2" fill="none" stroke="#dd1133" stroke-width="3.1"/><path d="M1.3 9 L4.8 2.3 L8.3 9 Z" fill="#e06070"/><path d="M11.3 5 L18.6 13.3 M18.6 5 L11.3 13.3" stroke="#111" stroke-width="2.5"/></svg>
<div class="t" style="left:342.20px;top:673px;font-size:16px;color:#333;">13</div>
<div class="t" style="left:380.60px;top:673px;font-size:16px;color:#333;letter-spacing:0.619px;">01.3</div>
<div class="t" style="left:534.00px;top:673px;font-size:16px;color:#333;letter-spacing:0.316px;">24/06/2021 08:19</div>
<div class="t" style="left:722.00px;top:673px;font-size:16px;color:#333;letter-spacing:0.292px;">24/06/2021 1...</div>
<div class="t" style="left:1221.00px;top:673px;font-size:16px;color:#333;letter-spacing:0.239px;">Teste</div>
<div class="t" style="left:1374.60px;top:673px;font-size:16px;color:#333;letter-spacing:0.515px;">001.02.06</div>
<div class="t" style="left:1533.90px;top:673px;font-size:16px;color:#333;letter-spacing:-1.226px;">TERRAPLANAGEM</div>
<div class="a" style="left:37px;top:700px;width:1819px;height:40px;background:#dcdcdc;"></div>
<div class="a" style="left:57px;top:710.0px;width:21px;height:21px;background:#fff;border:1.5px solid #a6a6a6;box-sizing:border-box"></div>
<svg class="a" style="left:145px;top:709px" width="23" height="23" viewBox="0 0 23 23"><path d="M2.5 9 V13 Q2.5 20 9.5 20 Q14.5 20 16 19" fill="none" stroke="#22dd22" stroke-width="3"/><path d="M16.3 7 V20" stroke="#22dd22" stroke-width="3"/><path d="M11.8 8 L16.3 1.5 L20.8 8 Z" fill="#22dd22"/><path d="M16 16 Q20 17 20.5 14" fill="none" stroke="#22dd22" stroke-width="2.5"/><circle cx="13" cy="13.6" r="1.1" fill="#222"/><circle cx="19.3" cy="15.2" r="1.1" fill="#222"/><circle cx="14.8" cy="19.6" r="1.1" fill="#222"/></svg>
<div class="t" style="left:351.10px;top:713px;font-size:16px;color:#333;">2</div>
<div class="t" style="left:380.60px;top:713px;font-size:16px;color:#333;letter-spacing:0.619px;">01.3</div>
<div class="t" style="left:534.00px;top:713px;font-size:16px;color:#333;letter-spacing:0.316px;">08/12/2021 08:59</div>
<div class="t" style="left:722.00px;top:713px;font-size:16px;color:#333;letter-spacing:0.292px;">08/12/2021 1...</div>
<div class="t" style="left:1221.00px;top:713px;font-size:16px;color:#333;letter-spacing:0.239px;">Teste</div>
<div class="t" style="left:1374.60px;top:713px;font-size:16px;color:#333;letter-spacing:0.515px;">001.02.02</div>
<div class="t" style="left:1533.90px;top:713px;font-size:16px;color:#333;letter-spacing:-0.594px;">CONCRETO BO...</div>
<div class="a" style="left:57px;top:750.5px;width:21px;height:21px;background:#fff;border:1.5px solid #a6a6a6;box-sizing:border-box"></div>
<svg class="a" style="left:143px;top:749px" width="21" height="22" viewBox="0 0 21 22"><path d="M4.8 7 V14 Q4.8 20.6 11 20.6 Q15.8 20.6 18.6 16.2" fill="none" stroke="#dd1133" stroke-width="3.1"/><path d="M1.3 9 L4.8 2.3 L8.3 9 Z" fill="#e06070"/><path d="M11.3 5 L18.6 13.3 M18.6 5 L11.3 13.3" stroke="#111" stroke-width="2.5"/></svg>
<div class="t" style="left:351.10px;top:754px;font-size:16px;color:#333;">1</div>
<div class="t" style="left:380.60px;top:754px;font-size:16px;color:#333;letter-spacing:0.619px;">01.3</div>
<div class="t" style="left:534.00px;top:754px;font-size:16px;color:#333;letter-spacing:0.316px;">09/12/2021 08:59</div>
<div class="t" style="left:722.00px;top:754px;font-size:16px;color:#333;letter-spacing:0.292px;">09/12/2021 1...</div>
<div class="t" style="left:1009.00px;top:754px;font-size:16px;color:#333;letter-spacing:0.312px;">Apontamento: 1 - Erro: ...</div>
<div class="t" style="left:1221.00px;top:754px;font-size:16px;color:#333;letter-spacing:0.239px;">Teste</div>
<div class="a" style="left:37px;top:781px;width:1819px;height:41px;background:#dcdcdc;"></div>
<div class="a" style="left:57px;top:791.0px;width:21px;height:21px;background:#fff;border:1.5px solid #a6a6a6;box-sizing:border-box"></div>
<svg class="a" style="left:145px;top:790px" width="23" height="23" viewBox="0 0 23 23"><path d="M2.5 9 V13 Q2.5 20 9.5 20 Q14.5 20 16 19" fill="none" stroke="#22dd22" stroke-width="3"/><path d="M16.3 7 V20" stroke="#22dd22" stroke-width="3"/><path d="M11.8 8 L16.3 1.5 L20.8 8 Z" fill="#22dd22"/><path d="M16 16 Q20 17 20.5 14" fill="none" stroke="#22dd22" stroke-width="2.5"/><circle cx="13" cy="13.6" r="1.1" fill="#222"/><circle cx="19.3" cy="15.2" r="1.1" fill="#222"/><circle cx="14.8" cy="19.6" r="1.1" fill="#222"/></svg>
<div class="t" style="left:351.10px;top:794px;font-size:16px;color:#333;">3</div>
<div class="t" style="left:380.60px;top:794px;font-size:16px;color:#333;letter-spacing:0.619px;">01.3</div>
<div class="t" style="left:533.00px;top:794px;font-size:16px;color:#333;letter-spacing:0.382px;">10/12/2021 08:16</div>
<div class="t" style="left:721.00px;top:794px;font-size:16px;color:#333;letter-spacing:0.363px;">10/12/2021 1...</div>
<div class="t" style="left:1221.00px;top:794px;font-size:16px;color:#333;letter-spacing:0.239px;">Teste</div>
<div class="t" style="left:1374.60px;top:794px;font-size:16px;color:#333;letter-spacing:0.515px;">001.02.02</div>
<div class="t" style="left:1533.90px;top:794px;font-size:16px;color:#333;letter-spacing:-0.594px;">CONCRETO BO...</div>
<div class="a" style="left:3px;top:457px;width:1853px;height:1px;background:#cbcbcb;"></div>
<div class="a" style="left:36px;top:422px;width:1.3px;height:35px;background:#aaaaaa;"></div>
<div class="a" style="left:98px;top:423px;width:2px;height:399px;background:#a3a3a3;"></div>
<div class="a" style="left:100px;top:423px;width:1px;height:399px;background:#cfcfcf;"></div>
<div class="a" style="left:212px;top:423px;width:1px;height:399px;background:#cdcdcd;"></div>
<div class="a" style="left:369px;top:423px;width:1px;height:399px;background:#cdcdcd;"></div>
<div class="a" style="left:522px;top:423px;width:1px;height:399px;background:#cdcdcd;"></div>
<div class="a" style="left:710px;top:423px;width:1px;height:399px;background:#cdcdcd;"></div>
<div class="a" style="left:848px;top:423px;width:1px;height:399px;background:#cdcdcd;"></div>
<div class="a" style="left:998px;top:423px;width:1px;height:399px;background:#cdcdcd;"></div>
<div class="a" style="left:1210px;top:423px;width:1px;height:399px;background:#cdcdcd;"></div>
<div class="a" style="left:1364px;top:423px;width:1px;height:399px;background:#cdcdcd;"></div>
<div class="a" style="left:1523px;top:423px;width:1px;height:399px;background:#cdcdcd;"></div>
<div class="a" style="left:1673px;top:423px;width:1px;height:399px;background:#cdcdcd;"></div>
<div class="a" style="left:37px;top:781.0px;width:62px;height:40px;box-sizing:border-box;border:1.5px dotted #111;background:#c9d9f1"></div>
<div class="a" style="left:43.5px;top:787.0px;width:48.5px;height:28px;background:#fff"></div>
<div class="a" style="left:57px;top:791.0px;width:21px;height:21px;background:#fff;border:1.5px solid #a6a6a6;box-sizing:border-box"></div>
<svg class="a" style="left:13px;top:793px" width="15" height="16" viewBox="0 0 15 16"><path d="M1.5 14.5 L2.5 10.5 L11 2 Q12 1 13 2 L14 3 Q15 4 14 5 L5.5 13.5 Z" fill="#1f86b8"/><path d="M3.5 11 L5 12.5" stroke="#bfe2f2" stroke-width="1"/></svg>
<div class="a" style="left:1856px;top:457px;width:25px;height:385px;background:#f0f0f0;"></div>
<div class="a" style="left:1857px;top:460px;width:22px;height:23.5px;background:#fff;border:1.2px solid #b0b0b0;box-sizing:border-box"></div>
<svg class="a" style="left:1863px;top:467.5px" width="11" height="6" viewBox="0 0 11 6"><path d="M0 6 L5.5 0 L11 6 Z" fill="#777"/></svg>
<div class="a" style="left:1857.5px;top:587.5px;width:21.5px;height:229px;background:#fff;border:1.3px solid #a9a9a9;box-sizing:border-box"></div>
<div class="a" style="left:1857.5px;top:816px;width:21.5px;height:23px;background:#fff;border:1.3px solid #a9a9a9;box-sizing:border-box"></div>
<svg class="a" style="left:1863px;top:825px" width="11" height="6" viewBox="0 0 11 6"><path d="M0 0 L5.5 6 L11 0 Z" fill="#777"/></svg>
<div class="a" style="left:3px;top:841px;width:1878px;height:1.5px;background:#c4c4c4;"></div>
<div class="a" style="left:3px;top:842.5px;width:1878px;height:57px;background:#efefef;"></div>
<div class="a" style="left:39.5px;top:852.5px;width:56.5px;height:35.5px;background:#fff;border:1.2px solid #c8c8c8;box-sizing:border-box"></div>
<div class="t" style="left:78.70px;top:864px;font-size:16px;color:#333;">0</div>
<div class="a" style="left:3px;top:899px;width:1878px;height:24px;background:#efefef;"></div>
<div class="a" style="left:4.5px;top:899px;width:25px;height:22px;background:#fff;border:1.3px solid #a9a9a9;box-sizing:border-box"></div>
<svg class="a" style="left:12px;top:905px" width="7" height="11" viewBox="0 0 7 11"><path d="M7 0 L0 5.5 L7 11 Z" fill="#777"/></svg>
<div class="a" style="left:28px;top:899.5px;width:1056px;height:21.5px;background:#fff;border:1.3px solid #a9a9a9;box-sizing:border-box"></div>
<div class="a" style="left:1855.5px;top:899px;width:23.5px;height:22px;background:#fff;border:1.3px solid #a9a9a9;box-sizing:border-box"></div>
<svg class="a" style="left:1866px;top:905px" width="6" height="10" viewBox="0 0 6 10"><path d="M0 0 L6 5 L0 10 Z" fill="#777"/></svg>
<div class="a" style="left:2px;top:922.5px;width:1881px;height:1.5px;background:#a9a9a9;"></div>
<div class="a" style="left:0px;top:924px;width:1890px;height:2px;background:#efefef;"></div>
<div class="a" style="left:458px;top:897.5px;width:107px;height:40px;background:#f9f9f9;border:1px solid #e2e2e2;border-radius:6px;box-shadow:0 1px 3px rgba(0,0,0,0.12);box-sizing:border-box"></div>
<div class="t" style="left:470.70px;top:912px;font-size:16px;color:#1a1a1a;letter-spacing:1.091px;">Búsqueda</div>
</body></html>
